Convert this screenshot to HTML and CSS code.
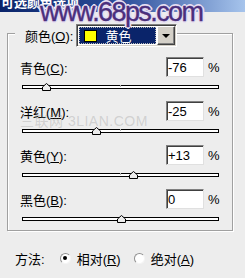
FILE: index.html
```html
<!DOCTYPE html>
<html lang="zh">
<head>
    <meta charset="UTF-8">
    <meta name="viewport" content="width=device-width, initial-scale=1.0">
    <title>可选颜色选项</title>
    <link rel="stylesheet" href="styles.css">
</head>
<body>
    <div class="dialog">
        <div class="titlebar"><span class="title">可选颜色选项</span></div>
        <div class="watermark">www.68ps.com</div>

        <div class="group">
            <div class="group-head">
                <label class="head-label">颜色(<u>O</u>):</label>
                <div class="combo">
                    <div class="combo-value"><span class="swatch"></span>黄色</div>
                    <div class="combo-btn"><span class="arrow"></span></div>
                </div>
            </div>

            <div class="channel">
                <div class="channel-row">
                    <label>青色(<u>C</u>):</label>
                    <input class="num" type="text" value="-76">
                    <span class="pct">%</span>
                </div>
                <div class="slider">
                    <div class="track"></div>
                    <svg class="thumb" style="left: calc(12% - 4px)" width="9" height="8" viewBox="0 0 9 8"><path d="M0.5 7.5V4L4.5 0.5L8.5 4V7.5Z"/></svg>
                </div>
            </div>

            <div class="channel">
                <div class="channel-row">
                    <label>洋红(<u>M</u>):</label>
                    <input class="num" type="text" value="-25">
                    <span class="pct">%</span>
                </div>
                <div class="slider">
                    <div class="track"></div>
                    <svg class="thumb" style="left: calc(37.5% - 4px)" width="9" height="8" viewBox="0 0 9 8"><path d="M0.5 7.5V4L4.5 0.5L8.5 4V7.5Z"/></svg>
                </div>
            </div>

            <div class="channel">
                <div class="channel-row">
                    <label>黄色(<u>Y</u>):</label>
                    <input class="num" type="text" value="+13">
                    <span class="pct">%</span>
                </div>
                <div class="slider">
                    <div class="track"></div>
                    <svg class="thumb" style="left: calc(56.5% - 4px)" width="9" height="8" viewBox="0 0 9 8"><path d="M0.5 7.5V4L4.5 0.5L8.5 4V7.5Z"/></svg>
                </div>
            </div>

            <div class="channel">
                <div class="channel-row">
                    <label>黑色(<u>B</u>):</label>
                    <input class="num" type="text" value="0">
                    <span class="pct">%</span>
                </div>
                <div class="slider">
                    <div class="track"></div>
                    <svg class="thumb" style="left: calc(50% - 4px)" width="9" height="8" viewBox="0 0 9 8"><path d="M0.5 7.5V4L4.5 0.5L8.5 4V7.5Z"/></svg>
                </div>
            </div>
        </div>

        <div class="method">
            <span class="method-label">方法:</span>
            <span class="radio checked"></span>
            <span class="radio-label">相对(<u>R</u>)</span>
            <span class="radio"></span>
            <span class="radio-label">绝对(<u>A</u>)</span>
        </div>

        <div class="site-mark">三联网 3LIAN.COM</div>
    </div>
</body>
</html>
```

FILE: styles.css
```css
body {
    margin: 0;
    background-color: #ededed;
    font-family: "Liberation Sans", "Noto Sans CJK SC", sans-serif;
    font-size: 13px;
    color: #000;
}

.dialog {
    position: relative;
    width: 245px;
    height: 278px;
    overflow: hidden;
    display: flex;
    flex-direction: column;
}

.titlebar {
    height: 12px;
    flex-shrink: 0;
    overflow: hidden;
    background: linear-gradient(to right, #0a246a 0%, #2d4f9c 50%, #a6c4ec 100%);
}

.title {
    display: block;
    margin-top: -6px;
    padding-left: 1px;
    color: #fff;
    font-weight: bold;
    font-size: 13px;
    line-height: 16px;
    font-family: "Noto Sans CJK SC", sans-serif;
}

.watermark {
    position: absolute;
    left: 40px;
    top: -3px;
    font-size: 27px;
    letter-spacing: -1.6px;
    color: #4b2f7d;
    font-family: "Liberation Sans", sans-serif;
    -webkit-text-stroke: 0.4px #4b2f7d;
    text-shadow: 1px 0 #e6def2, -1px 0 #e6def2, 0 1px #e6def2, 0 -1px #e6def2,
        1px 1px #e6def2, -1px -1px #e6def2, 1px -1px #e6def2, -1px 1px #e6def2,
        2px 0 #e6def2, -2px 0 #e6def2, 0 2px #e6def2, 0 -2px #e6def2;
}

.group {
    flex-shrink: 0;
    box-sizing: border-box;
    height: 198px;
    margin: 21px 12px 0 7px;
    padding: 0 10px 0 12px;
    border: 1px solid #a0a0a0;
    box-shadow: inset 1px 1px #fff, 1px 1px #fff;
    display: flex;
    flex-direction: column;
}

.group-head {
    flex-shrink: 0;
    align-self: flex-start;
    display: flex;
    align-items: center;
    height: 23px;
    margin: -10px 0 0 -5px;
    padding-left: 10px;
    background-color: #ededed;
}

.head-label {
    margin-right: 3px;
}

.combo {
    box-sizing: border-box;
    display: flex;
    width: 101px;
    height: 23px;
    border: 1px solid;
    border-color: #808080 #fff #fff #808080;
    box-shadow: inset 1px 1px #404040, inset -1px -1px #d4d0c8;
    padding: 1px;
    background-color: #fff;
}

.combo-value {
    flex: 1;
    display: flex;
    align-items: center;
    margin: 1px;
    padding-left: 5px;
    background-color: #0a246a;
    outline: 1px dotted #b8b8b8;
    outline-offset: -1px;
    color: #fff;
}

.swatch {
    width: 11px;
    height: 10px;
    margin-right: 8px;
    background-color: #ffff00;
    border: 1px solid #000;
}

.combo-btn {
    box-sizing: border-box;
    width: 18px;
    display: flex;
    align-items: center;
    justify-content: center;
    background-color: #d4d0c8;
    border: 1px solid;
    border-color: #fff #404040 #404040 #fff;
    box-shadow: inset -1px -1px #808080;
}

.arrow {
    width: 0;
    height: 0;
    border-left: 4px solid transparent;
    border-right: 4px solid transparent;
    border-top: 4px solid #000;
}

.channel {
    flex-shrink: 0;
}

.group-head + .channel {
    margin-top: 10px;
}

.channel-row {
    display: flex;
    align-items: center;
    height: 20px;
}

.channel-row label {
    flex: 1;
}

.num {
    box-sizing: border-box;
    width: 38px;
    height: 20px;
    margin: 0;
    padding: 0 0 0 1px;
    border: 1px solid;
    border-color: #808080 #e0e0e0 #e0e0e0 #808080;
    box-shadow: inset 1px 1px #404040;
    background-color: #fff;
    font-family: "Liberation Sans", sans-serif;
    font-size: 13px;
    color: #000;
}

.pct {
    width: 14px;
    margin-left: 4px;
}

.slider {
    position: relative;
    height: 24px;
    margin: 0 3px 0 2px;
}

.track {
    position: absolute;
    left: 0;
    right: 0;
    top: 8px;
    height: 2px;
    border: 1px solid #000;
    background-color: #fff;
}

.track::after {
    content: "";
    position: absolute;
    left: 97px;
    top: -1px;
    width: 1px;
    height: 2px;
    background-color: #b0b0b0;
}

.thumb {
    position: absolute;
    top: 6px;
}

.thumb path {
    fill: #ececec;
    stroke: #000;
    stroke-width: 1;
}

.method {
    flex-shrink: 0;
    display: flex;
    align-items: center;
    height: 16px;
    margin-top: 19px;
    padding-left: 15px;
}

.method-label {
    margin-right: 15px;
}

.radio {
    box-sizing: border-box;
    position: relative;
    width: 11px;
    height: 11px;
    margin-right: 6px;
    border-radius: 50%;
    border: 1px solid;
    border-color: #909090 #f4f4f4 #f4f4f4 #909090;
    background-color: #fff;
}

.radio.checked::after {
    content: "";
    position: absolute;
    left: 2.5px;
    top: 2.5px;
    width: 4px;
    height: 4px;
    border-radius: 50%;
    background-color: #000;
}

.radio-label {
    margin-right: 13px;
}

.site-mark {
    position: absolute;
    left: 20px;
    top: 110px;
    font-size: 14px;
    color: rgba(140, 140, 140, 0.3);
    letter-spacing: 0.5px;
}
```
